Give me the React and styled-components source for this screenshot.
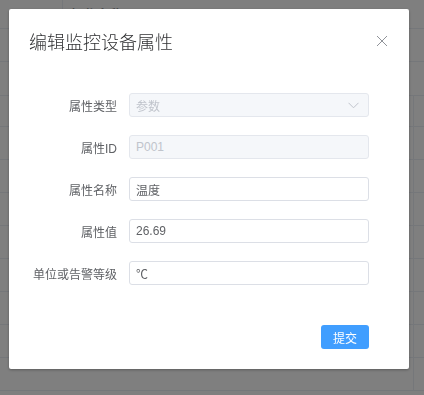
import React from "react";
import styled, { createGlobalStyle } from "styled-components";

const Global = createGlobalStyle`
  html, body { margin: 0; padding: 0; background: #fff; }
  body { font-family: "Liberation Sans", "Noto Sans CJK SC", sans-serif; overflow: hidden; }
  * { box-sizing: border-box; }
`;

const Page = styled.div`
  width: 424px;
  height: 395px;
  background: #fff;
  overflow: hidden;
`;

const HeaderRow = styled.div`
  display: flex;
  height: 29px;
  border-bottom: 1px solid #ebeef5;
`;

const HeadCell = styled.div`
  width: ${(p) => p.$w || "auto"};
  flex: ${(p) => (p.$w ? "none" : "1")};
  border-right: ${(p) => (p.$line ? "1px solid #ebeef5" : "none")};
  padding: 4px 8px;
  font-size: 13px;
  font-weight: bold;
  color: #909399;
`;

const Row = styled.div`
  display: flex;
  height: ${(p) => p.$h}px;
  border-bottom: 1px solid #ebeef5;
`;

const Cell = styled.div`
  width: ${(p) => p.$w || "auto"};
  flex: ${(p) => (p.$w ? "none" : "1")};
  border-left: ${(p) => (p.$line ? "1px solid #ebeef5" : "none")};
`;

const Overlay = styled.div`
  position: fixed;
  inset: 0;
  background: rgba(0, 0, 0, 0.5);
  display: flex;
  align-items: flex-start;
  justify-content: flex-start;
  padding: 9px;
`;

const Dialog = styled.div`
  width: 400px;
  background: #fff;
  border-radius: 2px;
  box-shadow: 0 1px 3px rgba(0, 0, 0, 0.3);
`;

const DialogHeader = styled.div`
  display: flex;
  align-items: center;
  justify-content: space-between;
  padding: 20px 21px 10px 20px;
`;

const Title = styled.span`
  font-size: 18px;
  line-height: 24px;
  color: #303133;
  font-weight: 300;
  font-family: "Noto Sans CJK SC", sans-serif;
`;

const CloseBtn = styled.button`
  border: none;
  background: transparent;
  padding: 0;
  width: 12px;
  height: 12px;
  display: flex;
  cursor: pointer;
`;

const Body = styled.div`
  padding: 30px 20px;
`;

const FormItem = styled.div`
  display: flex;
  align-items: center;
  margin-bottom: 18px;
  &:last-child { margin-bottom: 0; }
  height: 24px;
`;

const Label = styled.label`
  width: 100px;
  padding-right: 12px;
  text-align: right;
  font-size: 12px;
  color: #606266;
  font-family: "Liberation Sans", "Noto Sans CJK SC", sans-serif;
  white-space: nowrap;
`;

const InputBox = styled.div`
  position: relative;
  width: 240px;
  height: 24px;
  border: 1px solid ${(p) => (p.$disabled ? "#e4e7ed" : "#dcdfe6")};
  background: ${(p) => (p.$disabled ? "#f5f7fa" : "#fff")};
  border-radius: 3px;
  display: flex;
  align-items: center;
  padding: 0 6px;
  font-size: 12px;
  color: ${(p) => (p.$disabled ? "#c0c4cc" : "#606266")};
`;

const Arrow = styled.svg`
  position: absolute;
  right: 9px;
  top: 8px;
`;

const Footer = styled.div`
  display: flex;
  justify-content: flex-end;
  padding: 10px 40px 20px 20px;
`;

const Button = styled.button`
  width: 48px;
  height: 24px;
  border: none;
  border-radius: 3px;
  background: #409eff;
  color: #fff;
  font-size: 12px;
  font-family: "Noto Sans CJK SC", sans-serif;
  padding: 0;
  cursor: pointer;
`;

const fields = [
  { label: "属性类型", value: "参数", disabled: true, select: true },
  { label: "属性ID", value: "P001", disabled: true },
  { label: "属性名称", value: "温度" },
  { label: "属性值", value: "26.69" },
  { label: "单位或告警等级", value: "℃" },
];

const rowHeights = [33, 34, 31, 33, 33, 33, 33, 33, 33, 33, 33];

export default function App() {
  return (
    <>
      <Global />
      <Page>
        <HeaderRow>
          <HeadCell $w="63px" $line />
          <HeadCell>操作名称</HeadCell>
        </HeaderRow>
        {rowHeights.map((h, i) => (
          <Row key={i} $h={h}>
            <Cell />
            <Cell $w="11px" $line={i >= 2} />
          </Row>
        ))}
      </Page>
      <Overlay>
        <Dialog>
          <DialogHeader>
            <Title>编辑监控设备属性</Title>
            <CloseBtn aria-label="close">
              <svg width="12" height="12" viewBox="0 0 12 12">
                <path d="M1 1 L11 11 M11 1 L1 11" stroke="#909399" strokeWidth="1" fill="none" />
              </svg>
            </CloseBtn>
          </DialogHeader>
          <Body>
            {fields.map((f) => (
              <FormItem key={f.label}>
                <Label>{f.label}</Label>
                <InputBox $disabled={f.disabled}>
                  {f.value}
                  {f.select && (
                    <Arrow width="11" height="7" viewBox="0 0 11 7">
                      <path d="M0.5 0.8 L5.5 5.8 L10.5 0.8" stroke="#c0c4cc" strokeWidth="1" fill="none" />
                    </Arrow>
                  )}
                </InputBox>
              </FormItem>
            ))}
          </Body>
          <Footer>
            <Button>提交</Button>
          </Footer>
        </Dialog>
      </Overlay>
    </>
  );
}
